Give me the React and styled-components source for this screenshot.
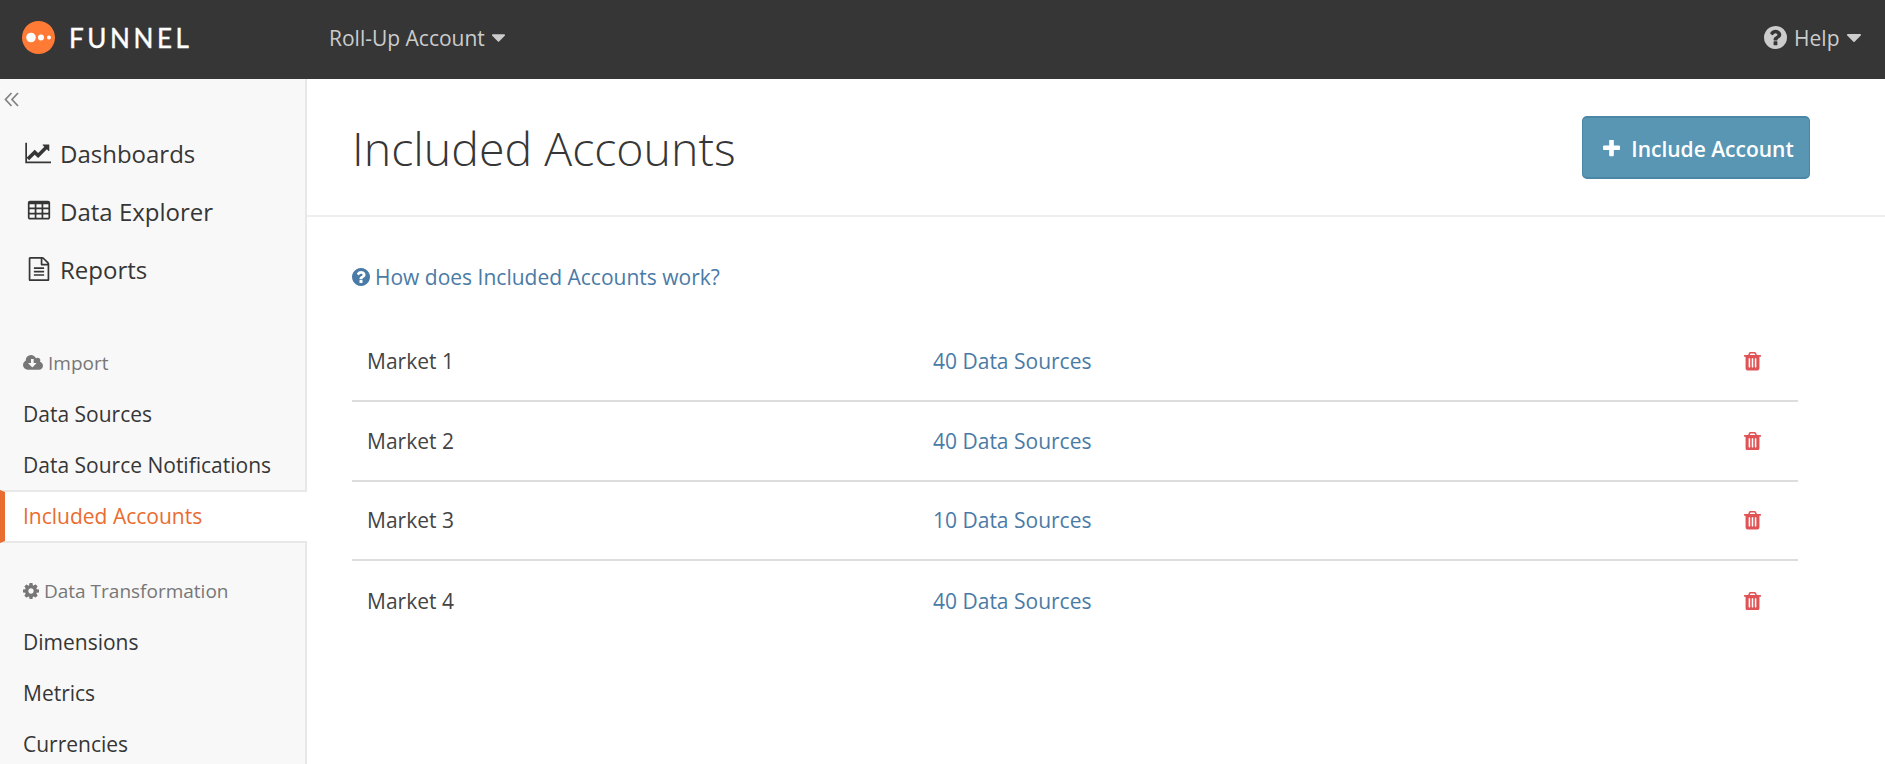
import React from 'react';
import styled, { createGlobalStyle } from 'styled-components';

const Global = createGlobalStyle`
  html, body { margin: 0; padding: 0; height: 100%; background: #fff; overflow: hidden; }
  body { font-family: "Open Sans", "Liberation Sans", sans-serif; color: #363636; }
  #root { height: 100%; }
`;

const Page = styled.div`
  display: flex;
  flex-direction: column;
  height: 100vh;
  overflow: hidden;
`;
const TopBar = styled.header`
  flex: 0 0 79px;
  box-sizing: border-box;
  display: flex;
  align-items: center;
  background: #363636;
  padding: 0 24px 4px 22px;
`;
const Brand = styled.div`
  display: flex;
  align-items: center;
  gap: 14px;
  width: 307px;
`;
const Wordmark = styled.span`
  font-family: "Lato", sans-serif;
  font-size: 26px;
  font-weight: 400;
  letter-spacing: 3.6px;
  color: #fff;
  line-height: 1;
  -webkit-text-stroke: 0.4px #fff;
`;
const TopLink = styled.a`
  display: flex;
  align-items: center;
  gap: 7.5px;
  font-size: 21px;
  color: #ccc;
  margin-left: ${p => (p.$right ? 'auto' : '0')};
`;
const Glyph = styled.svg`
  display: block;
  flex: none;
  fill: currentColor;
`;
const Body = styled.div`
  flex: 1;
  display: flex;
  min-height: 0;
`;
const Sidebar = styled.nav`
  flex: 0 0 307px;
  min-width: 0;
  box-sizing: border-box;
  background: #f8f8f8;
  border-right: 2px solid #e8e8e8;
`;
const Collapse = styled.div`
  height: 45px;
  padding: 11px 0 0 4px;
  box-sizing: border-box;
  color: #808080;
`;
const MainItem = styled.a`
  display: flex;
  align-items: center;
  height: 58px;
  font-size: 24px;
  color: #363636;
`;
const MainIcon = styled.span`
  flex: 0 0 60px;
  display: flex;
  justify-content: center;
  padding-left: 20px;
  box-sizing: border-box;
  padding-right: 3px;
`;
const SectionLabel = styled.div`
  display: flex;
  align-items: center;
  gap: 5px;
  height: 50px;
  margin-top: ${p => p.$top}px;
  padding-left: 23px;
  font-size: 19px;
  color: #777;
`;
const SubItem = styled.a`
  display: flex;
  align-items: center;
  height: 51px;
  box-sizing: border-box;
  padding-left: 23px;
  font-size: 21px;
  color: #363636;
  ${p => p.$active && `
    height: 52.5px;
    margin-bottom: -1.5px;
    width: 307px;
    background: #fff;
    color: #e96c30;
    border-top: 2px solid #e8e8e8;
    border-bottom: 2px solid #e8e8e8;
    border-left: 5px solid #e96c30;
    padding-left: 18px;
  `}
`;
const Main = styled.main`
  flex: 1;
  min-width: 0;
`;
const PageHead = styled.div`
  display: flex;
  align-items: center;
  justify-content: space-between;
  height: 138px;
  box-sizing: border-box;
  padding: 0 75px 0 45px;
  border-bottom: 2px solid #eee;
`;
const Title = styled.h1`
  margin: 2px 0 0;
  font-size: 46.500px;
  font-weight: 300;
  color: #363636;
`;
const IncludeButton = styled.button`
  display: flex;
  align-items: center;
  gap: 11px;
  height: 63px;
  width: 228px;
  box-sizing: border-box;
  justify-content: center;
  padding: 3px 0 0 5px;
  background: #5896b4;
  border: 1px solid #4a87a6;
  border-bottom-width: 2px;
  border-top-width: 2px;
  border-radius: 5px;
  color: #fff;
  font-family: inherit;
  font-size: 21px;
  font-weight: 600;
`;
const Content = styled.div`
  padding: 42px 87px 0 45px;
`;
const HelpLink = styled.a`
  display: flex;
  align-items: center;
  gap: 5px;
  height: 36px;
  font-size: 21px;
  color: #4a7ba6;
`;
const AccountList = styled.div`
  margin-top: 27.500px;
`;
const Row = styled.div`
  display: grid;
  grid-template-columns: 566px 1fr auto;
  align-items: center;
  height: 79.5px;
  box-sizing: border-box;
  padding: 0 37px 0 15px;
  font-size: 21px;
  color: #444;
  border-bottom: ${p => (p.$last ? 'none' : '2px solid #ddd')};
`;
const SourceLink = styled.a`
  color: #4a7ba6;
`;
const Trash = styled.span`
  color: #e05254;
`;

const paths = {
  chart: ['0 0 2048 1792', 'M1920 1536v128h-1920v-1536h128v1408h1792zm-128-1248v435q0 21-19.500 29.500t-35.500-7.500l-121-121-633 633q-10 10-23 10t-23-10l-233-233-416 416-192-192 585-585q10-10 23-10t23 10l233 233 464-464-121-121q-16-16-7.500-35.500t29.500-19.500h435q14 0 23 9t9 23z'],
  table: ['0 0 1792 1792', 'M576 1376v-192q0-14-9-23t-23-9h-320q-14 0-23 9t-9 23v192q0 14 9 23t23 9h320q14 0 23-9t9-23zm0-384v-192q0-14-9-23t-23-9h-320q-14 0-23 9t-9 23v192q0 14 9 23t23 9h320q14 0 23-9t9-23zm512 384v-192q0-14-9-23t-23-9h-320q-14 0-23 9t-9 23v192q0 14 9 23t23 9h320q14 0 23-9t9-23zm-512-768v-192q0-14-9-23t-23-9h-320q-14 0-23 9t-9 23v192q0 14 9 23t23 9h320q14 0 23-9t9-23zm512 384v-192q0-14-9-23t-23-9h-320q-14 0-23 9t-9 23v192q0 14 9 23t23 9h320q14 0 23-9t9-23zm512 384v-192q0-14-9-23t-23-9h-320q-14 0-23 9t-9 23v192q0 14 9 23t23 9h320q14 0 23-9t9-23zm-512-768v-192q0-14-9-23t-23-9h-320q-14 0-23 9t-9 23v192q0 14 9 23t23 9h320q14 0 23-9t9-23zm512 384v-192q0-14-9-23t-23-9h-320q-14 0-23 9t-9 23v192q0 14 9 23t23 9h320q14 0 23-9t9-23zm0-384v-192q0-14-9-23t-23-9h-320q-14 0-23 9t-9 23v192q0 14 9 23t23 9h320q14 0 23-9t9-23zm128-320v1088q0 66-47 113t-113 47h-1344q-66 0-113-47t-47-113v-1088q0-66 47-113t113-47h1344q66 0 113 47t47 113z'],
  file: ['0 0 1792 1792', 'M1596 380q28 28 48 76t20 88v1152q0 40-28 68t-68 28h-1344q-40 0-68-28t-28-68v-1600q0-40 28-68t68-28h896q40 0 88 20t76 48zm-444-244v376h376q-10-29-22-41l-313-313q-12-12-41-22zm384 1528v-1024h-416q-40 0-68-28t-28-68v-416h-768v1536h1280zm-1024-864q0-14 9-23t23-9h704q14 0 23 9t9 23v64q0 14-9 23t-23 9h-704q-14 0-23-9t-9-23v-64zm736 224q14 0 23 9t9 23v64q0 14-9 23t-23 9h-704q-14 0-23-9t-9-23v-64q0-14 9-23t23-9h704zm0 256q14 0 23 9t9 23v64q0 14-9 23t-23 9h-704q-14 0-23-9t-9-23v-64q0-14 9-23t23-9h704z'],
  question: ['128 128 1536 1536', 'M1024 1376v-192q0-14-9-23t-23-9h-192q-14 0-23 9t-9 23v192q0 14 9 23t23 9h192q14 0 23-9t9-23zm256-672q0-88-55.500-163t-138.500-116-170-41q-243 0-371 213-15 24 8 42l132 100q7 6 19 6 16 0 25-12 53-68 86-92 34-24 86-24 48 0 85.500 26t37.500 59q0 38-20 61t-68 45q-63 28-115.500 86.500t-52.500 125.500v36q0 14 9 23t23 9h192q14 0 23-9t9-23q0-19 21.500-49.500t54.500-49.500q32-18 49-28.500t46-35 44.500-48 28-60.500 12.500-81zm384 192q0 209-103 385.500t-279.500 279.500-385.500 103-385.500-103-279.500-279.500-103-385.500 103-385.500 279.500-279.500 385.500-103 385.500 103 279.500 279.500 103 385.500z'],
  cloud: ['0 128 1920 1536', 'M1280 928q0-14-9-23t-23-9h-224v-352q0-13-9.500-22.500t-22.500-9.500h-192q-13 0-22.500 9.500t-9.500 22.500v352h-224q-13 0-22.500 9.500t-9.500 22.500q0 14 9 23l352 352q9 9 23 9t23-9l351-351q10-12 10-24zm640 224q0 159-112.500 271.500t-271.500 112.500h-1088q-185 0-316.500-131.500t-131.500-316.500q0-130 70-240t188-165q-2-30-2-43 0-212 150-362t362-150q156 0 285.500 87t188.500 231q71-62 166-62 106 0 181 75t75 181q0 76-41 138 130 31 213.500 135.500t83.500 238.500z'],
  cog: ['128 128 1536 1536', 'M1152 896q0-106-75-181t-181-75-181 75-75 181 75 181 181 75 181-75 75-181zm512-109v222q0 12-8 23t-20 13l-185 28q-19 54-39 91 35 50 107 138 10 12 10 25t-9 23q-27 37-99 108t-94 71q-12 0-26-9l-138-108q-44 23-91 38-16 136-29 186-7 28-36 28h-222q-14 0-24.500-8.500t-11.500-21.500l-28-184q-49-16-90-37l-141 107q-10 9-25 9-14 0-25-11-126-114-165-168-7-10-7-23 0-12 8-23 15-21 51-66.500t54-70.500q-27-50-41-99l-183-27q-13-2-21-12.500t-8-23.500v-222q0-12 8-23t19-13l186-28q14-46 39-92-40-57-107-138-10-12-10-24 0-10 9-23 26-36 98.500-107.500t94.500-71.500q13 0 26 10l138 107q44-23 91-38 16-136 29-186 7-28 36-28h222q14 0 24.500 8.500t11.500 21.500l28 184q49 16 90 37l142-107q9-9 24-9 13 0 25 10 129 119 165 170 7 8 7 22 0 12-8 23-15 21-51 66.500t-54 70.500q26 50 41 98l183 28q13 2 21 12.500t8 23.500z'],
  trash: ['192 128 1408 1536', 'M704 1376v-704q0-14-9-23t-23-9h-64q-14 0-23 9t-9 23v704q0 14 9 23t23 9h64q14 0 23-9t9-23zm256 0v-704q0-14-9-23t-23-9h-64q-14 0-23 9t-9 23v704q0 14 9 23t23 9h64q14 0 23-9t9-23zm256 0v-704q0-14-9-23t-23-9h-64q-14 0-23 9t-9 23v704q0 14 9 23t23 9h64q14 0 23-9t9-23zm-544-992h448l-48-117q-7-9-17-11h-317q-10 2-17 11zm928 32v64q0 14-9 23t-23 9h-96v948q0 83-47 143.500t-113 60.500h-832q-66 0-113-58.500t-47-141.500v-952h-96q-14 0-23-9t-9-23v-64q0-14 9-23t23-9h309l70-167q15-37 54-63t79-26h320q40 0 79 26t54 63l70 167h309q14 0 23 9t9 23z'],
  plus: ['192 192 1408 1408', 'M1600 736v192q0 40-28 68t-68 28h-416v416q0 40-28 68t-68 28h-192q-40 0-68-28t-28-68v-416h-416q-40 0-68-28t-28-68v-192q0-40 28-68t68-28h416v-416q0-40 28-68t68-28h192q40 0 68 28t28 68v416h416q40 0 68 28t28 68z'],
  caret: ['384 640 1024 576', 'M1408 704q0 26-19 45l-448 448q-19 19-45 19t-45-19l-448-448q-19-19-19-45t19-45 45-19h896q26 0 45 19t19 45z'],
};

const Icon = ({ name, w, h }) => (
  <Glyph viewBox={paths[name][0]} width={w} height={h} aria-hidden="true">
    <path d={paths[name][1]} />
  </Glyph>
);

const Logo = () => (
  <svg width="33" height="33" viewBox="0 0 33 33" aria-hidden="true">
    <circle cx="16.500" cy="16.500" r="16.500" fill="#ff7a35" />
    <circle cx="9" cy="16.500" r="4.800" fill="#fff" />
    <circle cx="19" cy="16.500" r="3" fill="#fff" />
    <circle cx="27" cy="16.500" r="2" fill="#fff" />
  </svg>
);

const Chevrons = () => (
  <svg width="15" height="15" viewBox="0 0 15 15" fill="none" stroke="currentColor" strokeWidth="1.700" aria-hidden="true">
    <path d="M7.500 1 1.500 7.500l6 6.500M14 1 8 7.500l6 6.500" />
  </svg>
);

const markets = [
  ['Market 1', '40 Data Sources'],
  ['Market 2', '40 Data Sources'],
  ['Market 3', '10 Data Sources'],
  ['Market 4', '40 Data Sources'],
];

export default function App() {
  return (
    <Page>
      <Global />
      <TopBar>
        <Brand>
          <Logo />
          <Wordmark>FUNNEL</Wordmark>
        </Brand>
        <TopLink>Roll-Up Account <Icon name="caret" w={13} h={8} /></TopLink>
        <TopLink $right>
          <Icon name="question" w={23} h={23} />
          Help
          <Icon name="caret" w={14} h={8} />
        </TopLink>
      </TopBar>
      <Body>
        <Sidebar>
          <Collapse><Chevrons /></Collapse>
          <MainItem><MainIcon><Icon name="chart" w={28} h={24} /></MainIcon>Dashboards</MainItem>
          <MainItem><MainIcon><Icon name="table" w={24} h={24} /></MainIcon>Data Explorer</MainItem>
          <MainItem><MainIcon><Icon name="file" w={24} h={24} /></MainIcon>Reports</MainItem>
          <SectionLabel $top={40}><Icon name="cloud" w={20} h={16} />Import</SectionLabel>
          <SubItem>Data Sources</SubItem>
          <SubItem>Data Source Notifications</SubItem>
          <SubItem $active>Included Accounts</SubItem>
          <SectionLabel $top={25}><Icon name="cog" w={16} h={16} />Data Transformation</SectionLabel>
          <SubItem>Dimensions</SubItem>
          <SubItem>Metrics</SubItem>
          <SubItem>Currencies</SubItem>
        </Sidebar>
        <Main>
          <PageHead>
            <Title>Included Accounts</Title>
            <IncludeButton><Icon name="plus" w={17} h={17} />Include Account</IncludeButton>
          </PageHead>
          <Content>
            <HelpLink><Icon name="question" w={18} h={18} />How does Included Accounts work?</HelpLink>
            <AccountList>
              {markets.map(([name, sources], i) => (
                <Row key={name} $last={i === markets.length - 1}>
                  <span>{name}</span>
                  <SourceLink>{sources}</SourceLink>
                  <Trash><Icon name="trash" w={17} h={18.5} /></Trash>
                </Row>
              ))}
            </AccountList>
          </Content>
        </Main>
      </Body>
    </Page>
  );
}
